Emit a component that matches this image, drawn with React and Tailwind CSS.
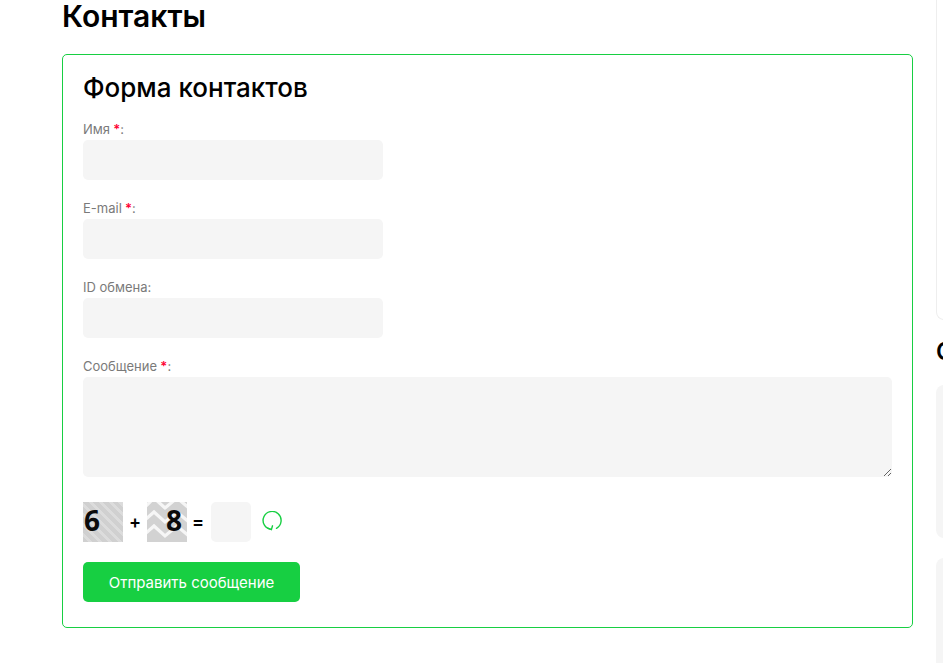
import { useState } from 'react'

const inputCls = 'block h-10 w-[300px] rounded-[5px] bg-[#f5f5f5] px-3 text-sm outline-none'
const labelCls = 'block h-5 text-[13px] leading-[18px] text-[#7a7a7a]'

function Field({ label, required }) {
  return (
    <div className="mb-[19px]">
      <label className={labelCls}>
        {label}
        {required && <span className="font-semibold text-[#ff0033]"> *</span>}:
      </label>
      <input className={inputCls} />
    </div>
  )
}

function Captcha({ digit, variant }) {
  return (
    <div
      className={
        variant === 'stripes'
          ? 'flex h-10 w-10 items-start bg-[#d4d4d4] bg-[repeating-linear-gradient(45deg,#d0d0d0_0px,#d0d0d0_4px,#dcdcdc_4px,#dcdcdc_7px)] pl-[1px]'
          : 'relative flex h-10 w-10 items-start justify-end overflow-hidden bg-[#d2d2d2] pr-[5px]'
      }
    >
      {variant !== 'stripes' && (
        <svg className="absolute inset-0 h-10 w-10" viewBox="0 0 40 40" fill="none" stroke="#f6f6f6" strokeWidth="3.2">
          <path d="M-2 5 L7 -4 L18 6 L30 -4 L42 6" />
          <path d="M-2 18 L7 10 L18 20 L30 10 L42 20" />
          <path d="M-2 32 L7 24 L18 34 L30 24 L42 34" />
        </svg>
      )}
      <span className="relative font-['Open_Sans',sans-serif] text-[28px] font-bold leading-9 text-[#0b0b0b]">{digit}</span>
    </div>
  )
}

export default function App() {
  const [answer, setAnswer] = useState('')

  return (
    <div className="flex h-[663px] w-[943px] gap-[23px] overflow-hidden bg-white pl-[62px] font-['Inter',sans-serif] text-black">
      <main className="w-[851px] shrink-0">
        <h1 className="mb-[21px] text-[30px] font-semibold leading-[33px]">Контакты</h1>
        <div className="h-[574px] rounded-[5px] border border-[#17cf42] px-5 pt-[15px]">
          <h2 className="mb-[14px] text-[26px] font-medium leading-9">Форма контактов</h2>
          <form>
            <Field label="Имя" required />
            <Field label="E-mail" required />
            <Field label="ID обмена" />
            <div className="mb-[25px]">
              <label className={labelCls}>
                Сообщение<span className="font-semibold text-[#ff0033]"> *</span>:
              </label>
              <textarea className="block h-[100px] w-full rounded-[5px] bg-[#f5f5f5] px-3 py-2 text-sm outline-none" />
            </div>
            <div className="mb-5 flex items-center">
              <Captcha digit="6" variant="stripes" />
              <span className="w-6 text-center text-lg font-semibold">+</span>
              <Captcha digit="8" variant="chevron" />
              <span className="mr-[2px] w-[22px] text-center text-lg font-semibold">=</span>
              <input
                value={answer}
                onChange={(e) => setAnswer(e.target.value)}
                className="h-10 w-10 rounded-[5px] bg-[#f5f5f5] text-center text-sm outline-none"
              />
              <svg className="ml-[10px] h-[22px] w-[22px]" viewBox="0 0 22 22" fill="none" stroke="#17cf42" strokeWidth="1.4" strokeLinecap="round">
                <path d="M10.2 18.4 A9 9 0 1 1 15.5 17.3" />
                <path d="M11.5 14.8 L10.4 18.6 L6.8 17.2" />
              </svg>
            </div>
            <button type="button" className="h-10 w-[217px] rounded-[5px] bg-[#17cf42] pt-[2px] text-[15px] text-white">
              Отправить сообщение
            </button>
          </form>
        </div>
      </main>
      <aside className="w-[300px] shrink-0">
        <div className="h-[320px] rounded-bl-lg border-b border-l border-[#eeeeee]" />
        <h3 className="mt-[15px] mb-[16px] text-[24px] font-semibold leading-[34px]">Статьи</h3>
        <div className="mb-5 h-[153px] rounded-lg bg-[#f5f5f5]" />
        <div className="h-[200px] rounded-lg bg-[#f5f5f5]" />
      </aside>
    </div>
  )
}
